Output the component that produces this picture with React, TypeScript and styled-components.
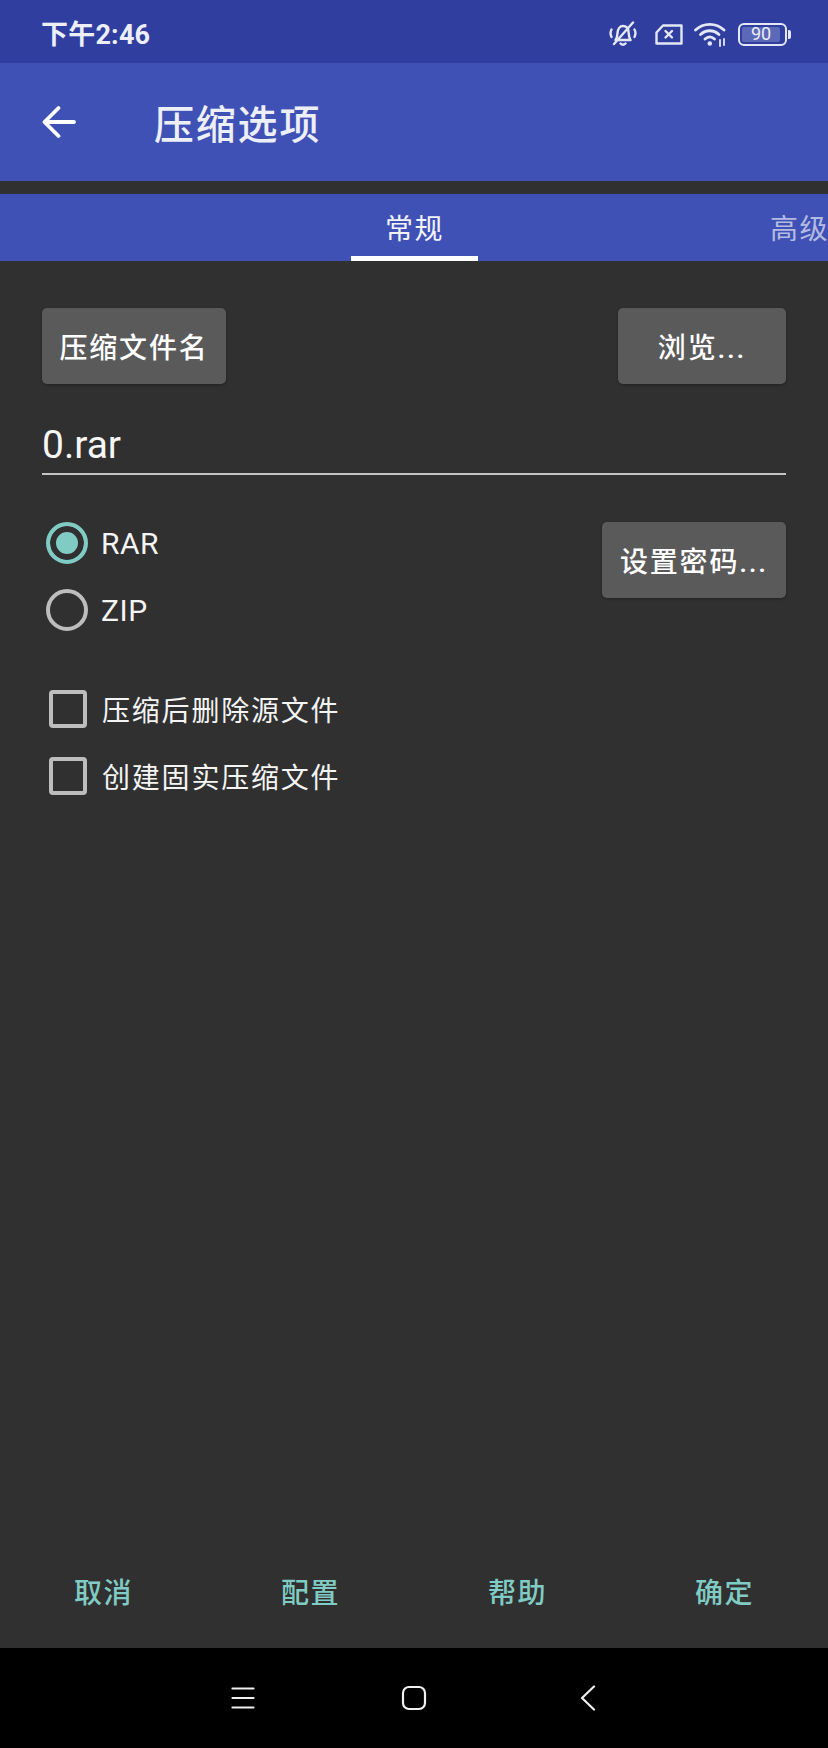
import React from "react";
import styled, { createGlobalStyle } from "styled-components";

const FONT = `"Roboto", "Noto Sans CJK SC", sans-serif`;

const GlobalStyle = createGlobalStyle`
  html, body {
    margin: 0;
    padding: 0;
    background: #303030;
  }
`;

export default function App() {
  return (
    <>
      <GlobalStyle />
      <Page>
        <StatusBar>
          <Clock>下午2:46</Clock>
          <StatusIcons>
            <svg width="28" height="26" viewBox="0 0 28 26" fill="none" stroke="#e4e7f6" strokeWidth="2.400" strokeLinecap="round" strokeLinejoin="round">
              <path d="M6.500 19c1.800-2 1.800-4.500 2-7C8.800 8 11 5 14 5c3 0 5.200 2.500 5.600 6 .3 3.500.3 6 2 8H6.500z" />
              <path d="M11.500 22.500c1.500 1.500 3.500 1.500 5 0" />
              <path d="M24 1.500 5 23" />
              <path d="M2.500 8.500c-1.300 2.500-1.300 5 0 7.500M25.500 8.500c1.300 2.500 1.300 5 0 7.500" />
            </svg>
            <SimIcon width="28" height="21" viewBox="0 0 28 21" fill="none" stroke="#e4e7f6" strokeWidth="2.400" strokeLinejoin="round" strokeLinecap="round">
              <path d="M8 1.500h18.500v18H1.500V8.500z" />
              <path d="m10.500 7 6.500 6.500M17 7l-6.500 6.500" strokeWidth="2.400" />
            </SimIcon>
            <svg width="33" height="25" viewBox="0 0 33 25" fill="none" stroke="#e4e7f6" strokeLinecap="round">
              <path d="M1.500 8C9.500 .5 22 .5 30 8" strokeWidth="2.800" />
              <path d="M6.500 12.500c5.500-5 13-5 18.500 0" strokeWidth="2.800" />
              <path d="M11 17c3-2.700 6.500-2.700 9.500 0" strokeWidth="2.800" />
              <circle cx="15.800" cy="21.500" r="2.300" fill="#e4e7f6" stroke="none" />
              <path d="M26 18v6M30 17v6" strokeWidth="1.800" />
            </svg>
            <BatteryGroup>
              <BatteryBody>
                <BatteryLevel>90</BatteryLevel>
              </BatteryBody>
              <BatteryTip />
            </BatteryGroup>
          </StatusIcons>
        </StatusBar>

        <AppBar>
          <BackIcon width="34" height="34" viewBox="0 0 34 34" fill="none" stroke="#fff" strokeWidth="3.800" strokeLinecap="round" strokeLinejoin="round">
            <path d="M2.500 17h29.500M16.500 3 2.500 17l14 14" />
          </BackIcon>
          <Title>压缩选项</Title>
        </AppBar>

        <TabStrip>
          <Tab $active>常规</Tab>
          <Tab>高级</Tab>
        </TabStrip>

        <Content>
          <ButtonRow>
            <ActionButton>压缩文件名</ActionButton>
            <BrowseButton>浏览...</BrowseButton>
          </ButtonRow>

          <NameField>0.rar</NameField>

          <FormatRow>
            <RadioGroup>
              <OptionRow>
                <Radio $checked />
                <FormatLabel>RAR</FormatLabel>
              </OptionRow>
              <OptionRow>
                <Radio />
                <FormatLabel>ZIP</FormatLabel>
              </OptionRow>
            </RadioGroup>
            <ActionButton>设置密码...</ActionButton>
          </FormatRow>

          <CheckGroup>
            <CheckRow>
              <CheckBox />
              <OptionLabel>压缩后删除源文件</OptionLabel>
            </CheckRow>
            <CheckRow>
              <CheckBox />
              <OptionLabel>创建固实压缩文件</OptionLabel>
            </CheckRow>
          </CheckGroup>
        </Content>

        <DialogActions>
          <DialogAction>取消</DialogAction>
          <DialogAction>配置</DialogAction>
          <DialogAction>帮助</DialogAction>
          <DialogAction>确定</DialogAction>
        </DialogActions>

        <NavBar>
          <svg width="24" height="24" viewBox="0 0 24 24" fill="none" stroke="#f0f0f0" strokeWidth="2.200" strokeLinecap="round">
            <path d="M1.500 2.500h21M1.500 12h21M1.500 21.500h21" />
          </svg>
          <svg width="26" height="26" viewBox="0 0 26 26" fill="none" stroke="#f0f0f0" strokeWidth="2.200">
            <rect x="2" y="2" width="22" height="22" rx="6" />
          </svg>
          <NavBack width="16" height="26" viewBox="0 0 16 26" fill="none" stroke="#f0f0f0" strokeWidth="2.200" strokeLinecap="round" strokeLinejoin="round">
            <path d="M14 1.500 2 13l12 11.500" />
          </NavBack>
        </NavBar>
      </Page>
    </>
  );
}

const Page = styled.div`
  width: 828px;
  height: 1748px;
  display: flex;
  flex-direction: column;
  overflow: hidden;
  background: #303030;
  font-family: ${FONT};
  color: #fff;
`;

const StatusBar = styled.div`
  height: 63px;
  box-sizing: border-box;
  padding: 0 37px 0 41px;
  display: flex;
  align-items: center;
  justify-content: space-between;
  background: #303f9f;
`;

const Clock = styled.div`
  font-size: 27px;
  font-weight: 700;
  letter-spacing: 0.200px;
  color: #eceef8;
  padding-top: 2px;
`;

const StatusIcons = styled.div`
  display: flex;
  align-items: center;
  gap: 11px;
  padding-top: 5px;
`;

const SimIcon = styled.svg`
  margin-left: 7px;
`;

const BatteryGroup = styled.div`
  display: flex;
  align-items: center;
  gap: 1px;
`;

const BatteryBody = styled.div`
  width: 49px;
  height: 23px;
  box-sizing: border-box;
  border: 2.500px solid #e4e7f6;
  border-radius: 6px;
  padding: 2px;
  display: flex;
`;

const BatteryLevel = styled.div`
  flex: 1;
  background: #5c68b8;
  border-radius: 2px;
  font-size: 18px;
  line-height: 14px;
  text-align: center;
  color: #eceef8;
  margin-right: 3px;
`;

const BatteryTip = styled.div`
  width: 3px;
  height: 9px;
  border-radius: 0 2px 2px 0;
  background: #e4e7f6;
`;

const AppBar = styled.div`
  height: 118px;
  box-sizing: border-box;
  padding-left: 42px;
  display: flex;
  align-items: center;
  background: #3f51b5;
`;

const BackIcon = styled.svg`
  flex: none;
`;

const Title = styled.div`
  margin-left: 78px;
  font-size: 40px;
  font-weight: 500;
  letter-spacing: 1.800px;
  color: #eceef8;
`;

const TabStrip = styled.div`
  margin-top: 13px;
  height: 67px;
  padding-left: 351px;
  display: flex;
  gap: 258px;
  overflow: hidden;
  background: #3f51b5;
`;

const Tab = styled.div<{ $active?: boolean }>`
  flex: none;
  width: 127px;
  height: 67px;
  box-sizing: border-box;
  padding-top: 19px;
  text-align: center;
  font-size: 28px;
  line-height: 34px;
  letter-spacing: 1.500px;
  color: ${(p) => (p.$active ? "#f2f3fb" : "#b4bbe2")};
  border-bottom: 5px solid ${(p) => (p.$active ? "#fff" : "transparent")};
`;

const Content = styled.div`
  flex: 1;
  padding: 47px 42px 0 42px;
  display: flex;
  flex-direction: column;
`;

const ButtonRow = styled.div`
  display: flex;
  justify-content: space-between;
`;

const ActionButton = styled.div`
  width: 184px;
  height: 76px;
  box-sizing: border-box;
  display: flex;
  align-items: center;
  justify-content: center;
  border-radius: 5px;
  background: #5a5a5b;
  box-shadow: 0 1px 3px rgba(0, 0, 0, 0.3);
  font-size: 28px;
  font-weight: 500;
  letter-spacing: 1.800px;
  white-space: nowrap;
`;

const BrowseButton = styled(ActionButton)`
  width: 168px;
`;

const NameField = styled.div`
  margin-top: 37px;
  height: 50px;
  padding-top: 2px;
  border-bottom: 2px solid #c4c4c4;
  font-size: 39px;
  line-height: 44px;
  color: #f6f6f6;
`;

const FormatRow = styled.div`
  margin-top: 47px;
  display: flex;
  justify-content: space-between;
  align-items: flex-start;
`;

const RadioGroup = styled.div`
  display: flex;
  flex-direction: column;
  gap: 25px;
  padding-left: 4px;
`;

const OptionRow = styled.div`
  height: 42px;
  display: flex;
  align-items: center;
  gap: 13px;
`;

const Radio = styled.div<{ $checked?: boolean }>`
  width: 42px;
  height: 42px;
  box-sizing: border-box;
  border-radius: 50%;
  border: 4px solid ${(p) => (p.$checked ? "#80cbc4" : "#bdbdbd")};
  background: ${(p) => (p.$checked ? "#80cbc4" : "transparent")};
  box-shadow: ${(p) => (p.$checked ? "inset 0 0 0 6px #303030" : "none")};
`;

const OptionLabel = styled.div`
  font-size: 28px;
  letter-spacing: 1.800px;
  color: #f4f4f4;
  white-space: nowrap;
`;

const FormatLabel = styled(OptionLabel)`
  font-size: 30px;
  letter-spacing: 0.500px;
`;

const CheckGroup = styled.div`
  margin-top: 59px;
  display: flex;
  flex-direction: column;
  gap: 29px;
  padding-left: 7px;
`;

const CheckRow = styled.div`
  height: 38px;
  display: flex;
  align-items: center;
  gap: 15px;
`;

const CheckBox = styled.div`
  width: 38px;
  height: 38px;
  box-sizing: border-box;
  border: 4px solid #bdbdbd;
  border-radius: 4px;
`;

const DialogActions = styled.div`
  height: 88px;
  display: grid;
  grid-template-columns: repeat(4, 1fr);
  align-items: center;
  padding: 0 0 26px;
  box-sizing: border-box;
`;

const DialogAction = styled.div`
  text-align: center;
  font-size: 28px;
  font-weight: 500;
  letter-spacing: 1.500px;
  color: #80cbc4;
`;

const NavBar = styled.div`
  height: 100px;
  box-sizing: border-box;
  padding-left: 231px;
  display: flex;
  align-items: center;
  gap: 146px;
  background: #000;
`;

const NavBack = styled.svg`
  margin-left: 7px;
`;
